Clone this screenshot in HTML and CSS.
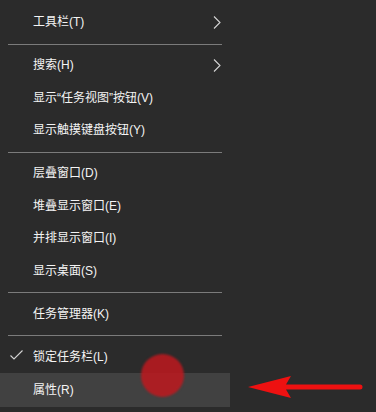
FILE: index.html
```html
<!DOCTYPE html>
<html lang="zh-CN">
<head>
<meta charset="utf-8">
<title>任务栏菜单</title>
<link rel="stylesheet" href="styles.css">
</head>
<body>
<div class="stage">
  <ul class="menu">
    <li class="item"><span class="mark"></span><span class="label">工具栏(T)</span><svg class="chev" width="8" height="13" viewBox="0 0 8 13"><path d="M1 0.5 L7 6.5 L1 12.5" fill="none" stroke="#d4d4d4" stroke-width="1.1"/></svg></li>
    <li class="sep"></li>
    <li class="item"><span class="mark"></span><span class="label">搜索(H)</span><svg class="chev" width="8" height="13" viewBox="0 0 8 13"><path d="M1 0.5 L7 6.5 L1 12.5" fill="none" stroke="#d4d4d4" stroke-width="1.1"/></svg></li>
    <li class="item"><span class="mark"></span><span class="label">显示“任务视图”按钮(V)</span></li>
    <li class="item"><span class="mark"></span><span class="label">显示触摸键盘按钮(Y)</span></li>
    <li class="sep"></li>
    <li class="item"><span class="mark"></span><span class="label">层叠窗口(D)</span></li>
    <li class="item"><span class="mark"></span><span class="label">堆叠显示窗口(E)</span></li>
    <li class="item"><span class="mark"></span><span class="label">并排显示窗口(I)</span></li>
    <li class="item"><span class="mark"></span><span class="label">显示桌面(S)</span></li>
    <li class="sep"></li>
    <li class="item"><span class="mark"></span><span class="label">任务管理器(K)</span></li>
    <li class="sep"></li>
    <li class="item"><span class="mark"><svg width="13" height="10" viewBox="0 0 13 10"><path d="M0.5 5.5 L4 9 L12.5 0.5" fill="none" stroke="#d4d4d4" stroke-width="1.1"/></svg></span><span class="label">锁定任务栏(L)</span></li>
    <li class="item hover"><span class="mark"></span><span class="label">属性(R)</span></li>
  </ul>
  <div class="dot"></div>
  <svg class="arrow" width="120" height="26" viewBox="0 0 120 26">
    <path d="M0 11 L43 0 L38 8.5 L112 8.5 A2.5 2.5 0 0 1 112 13.5 L38 13.5 L43 22 Z" fill="#ee1111"/>
  </svg>
</div>
</body>
</html>
```

FILE: styles.css
```css
html, body {
  margin: 0;
  padding: 0;
  background: #2b2b2b;
}
.stage {
  position: relative;
  width: 376px;
  height: 412px;
  overflow: hidden;
  background: #2b2b2b;
  font-family: "Liberation Sans", "Noto Sans CJK SC", sans-serif;
  font-size: 12px;
  color: #f4f4f4;
}
.menu {
  list-style: none;
  margin: 0;
  padding: 6px 0 0 0;
  width: 230px;
}
.item {
  display: flex;
  align-items: center;
  height: 32.5px;
  padding-right: 9px;
}
.item.hover {
  background: #414141;
  height: 33.5px;
}
.mark {
  width: 33px;
  flex: none;
  display: flex;
  align-items: center;
  padding-left: 10px;
  box-sizing: border-box;
}
.mark svg {
  display: block;
  margin-top: -3px;
}
.label {
  flex: 1;
  white-space: nowrap;
  line-height: 16px;
}
.chev {
  flex: none;
  display: block;
}
.sep {
  height: 1px;
  margin: 5px 8px 4.5px 8px;
  background: #7b7b7b;
}
.dot {
  position: absolute;
  left: 141px;
  top: 354px;
  width: 43px;
  height: 43px;
  border-radius: 50%;
  background: rgba(190, 25, 30, 0.85);
  filter: blur(0.8px);
}
.arrow {
  position: absolute;
  left: 248px;
  top: 376px;
}
```
